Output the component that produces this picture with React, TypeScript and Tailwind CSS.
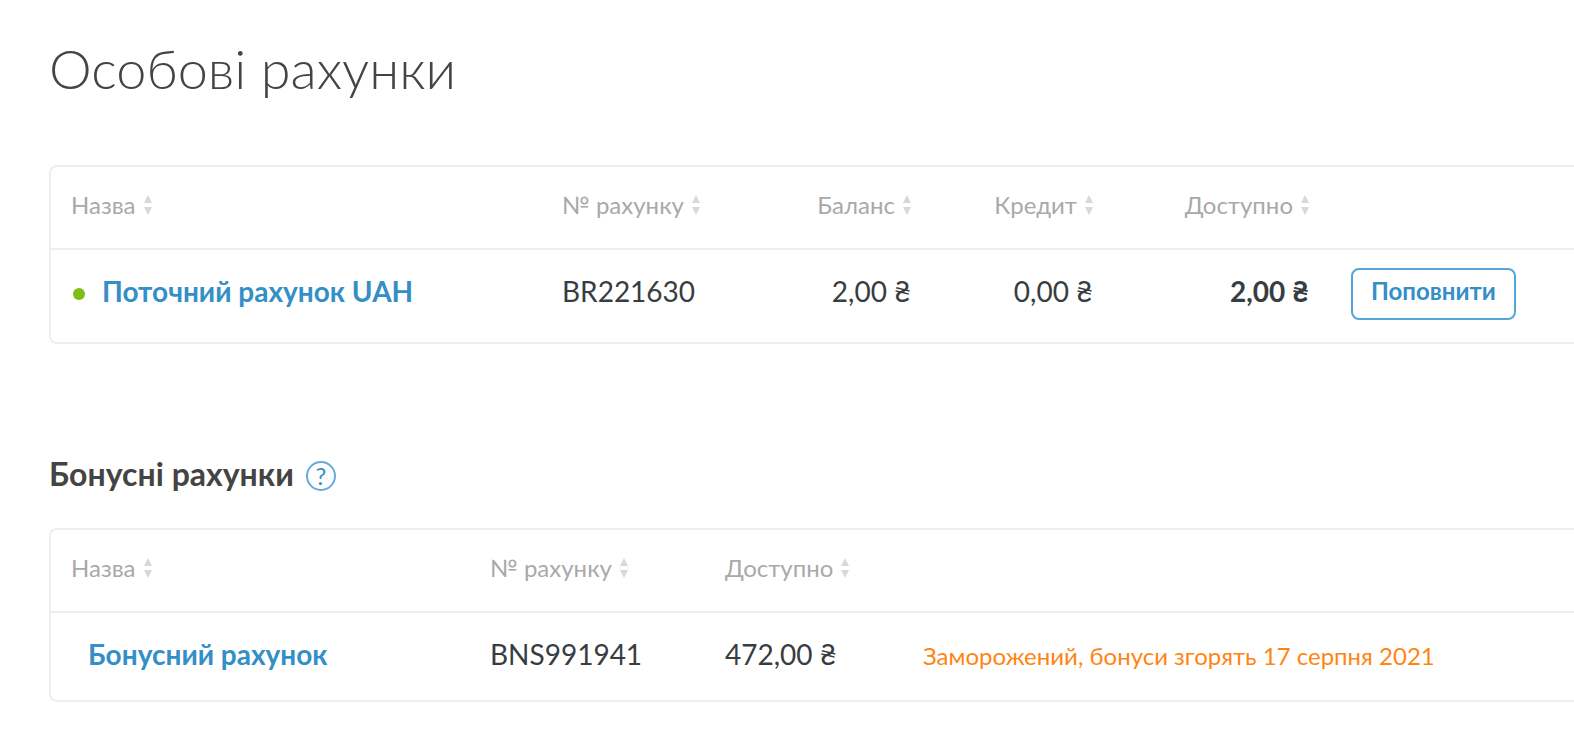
import type { ReactNode } from "react";

function SortIcon() {
  return (
    <svg width="8" height="20" viewBox="0 0 8 20" fill="#d8d8d8" aria-hidden="true" className="shrink-0">
      <path d="M4 0 8 8H0z" />
      <path d="M0 12h8l-4 8z" />
    </svg>
  );
}

function SortButton({ label }: { label: string }) {
  return (
    <button type="button" className="inline-flex cursor-pointer items-center gap-2 align-middle text-2xl text-[#a9a9a9]">
      <span>{label}</span>
      <SortIcon />
    </button>
  );
}

const headCell = "border-b-2 border-[#eeeeee] p-0 pb-2.5 text-left font-normal";
const headCellFirst = "border-b-2 border-[#eeeeee] p-0 pb-2.5 pl-5 text-left font-normal";
const headCellRight = "border-b-2 border-[#eeeeee] p-0 pb-2.5 text-right font-normal";

function Card({ children }: { children: ReactNode }) {
  return <div className="overflow-hidden rounded-l-lg border-2 border-r-0 border-[#eeeeee]">{children}</div>;
}

export default function App() {
  return (
    <main className="overflow-hidden bg-white pb-11 pl-[49px] pt-[34px] font-['Lato',sans-serif] text-[#373d41]">
      <h1 className="text-[54px] leading-[70px] font-light text-[#444444]">Особові рахунки</h1>

      <section className="mt-[61px]">
        <Card>
          <table className="w-full table-fixed border-separate border-spacing-0 whitespace-nowrap text-[28px] leading-9">
            <colgroup>
              <col className="w-[511px]" />
              <col className="w-[189px]" />
              <col className="w-40" />
              <col className="w-[182px]" />
              <col className="w-[216px]" />
              <col />
            </colgroup>
            <thead>
              <tr className="h-[83px]">
                <th scope="col" className={headCellFirst}><SortButton label="Назва" /></th>
                <th scope="col" className={headCell}><SortButton label="№ рахунку" /></th>
                <th scope="col" className={headCellRight}><SortButton label="Баланс" /></th>
                <th scope="col" className={headCellRight}><SortButton label="Кредит" /></th>
                <th scope="col" className={headCellRight}><SortButton label="Доступно" /></th>
                <td className={headCell} />
              </tr>
            </thead>
            <tbody>
              <tr className="h-[92px] align-top">
                <td className="p-0 pl-[22px] pt-[23px]">
                  <a href="#current" className="flex items-center gap-[17px] font-bold text-[#338fc6]">
                    <span className="mt-1.5 size-3 rounded-full bg-[#7cbd18]" />
                    <span>Поточний рахунок UAH</span>
                  </a>
                </td>
                <td className="p-0 pt-[23px]">BR221630</td>
                <td className="p-0 pt-[23px] text-right">2,00 ₴</td>
                <td className="p-0 pt-[23px] text-right">0,00 ₴</td>
                <td className="p-0 pt-[23px] text-right font-bold">2,00 ₴</td>
                <td className="p-0 pl-[42px] pt-[18px]">
                  <button
                    type="button"
                    className="block h-[52px] cursor-pointer rounded-lg border-2 border-[#54a6d8] px-[18px] pb-1.5 text-2xl font-bold text-[#338fc6]"
                  >
                    Поповнити
                  </button>
                </td>
              </tr>
            </tbody>
          </table>
        </Card>
      </section>

      <section className="mt-[108px]">
        <div className="flex items-center gap-3">
          <h2 className="text-[32px] leading-11 font-bold text-[#444444]">Бонусні рахунки</h2>
          <button
            type="button"
            aria-label="Довідка"
            className="mt-1 flex size-[30px] cursor-pointer items-center justify-center rounded-full border-2 border-[#63acdb] text-2xl leading-none text-[#338fc6]"
          >
            ?
          </button>
        </div>
        <div className="mt-8">
          <Card>
            <table className="w-full table-fixed border-separate border-spacing-0 whitespace-nowrap text-[28px] leading-9">
              <colgroup>
                <col className="w-[439px]" />
                <col className="w-[235px]" />
                <col className="w-[198px]" />
                <col />
              </colgroup>
              <thead>
                <tr className="h-[83px]">
                  <th scope="col" className={headCellFirst}><SortButton label="Назва" /></th>
                  <th scope="col" className={headCell}><SortButton label="№ рахунку" /></th>
                  <th scope="col" className={headCell}><SortButton label="Доступно" /></th>
                  <td className={headCell} />
                </tr>
              </thead>
              <tbody>
                <tr className="h-[87px] align-top">
                  <td className="p-0 pl-[37px] pt-[23px]">
                    <a href="#bonus" className="font-bold text-[#338fc6]">
                      Бонусний рахунок
                    </a>
                  </td>
                  <td className="p-0 pt-[23px]">BNS991941</td>
                  <td className="p-0 pt-[23px]">472,00 ₴</td>
                  <td className="p-0 pt-[25px] text-2xl leading-9 text-[#ff8512]">
                    Заморожений, бонуси згорять 17 серпня 2021
                  </td>
                </tr>
              </tbody>
            </table>
          </Card>
        </div>
      </section>
    </main>
  );
}
